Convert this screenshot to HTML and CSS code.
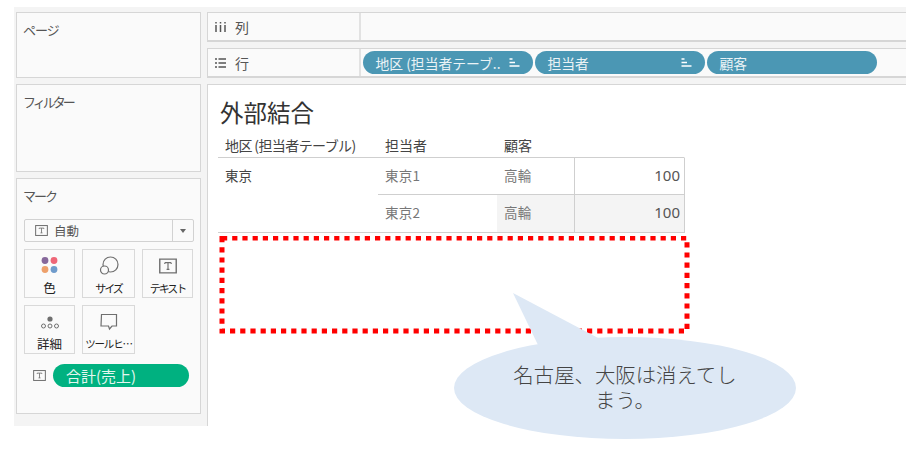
FILE: index.html
```html
<!DOCTYPE html>
<html lang="ja">
<head>
<meta charset="utf-8">
<title>外部結合</title>
<link rel="stylesheet" href="styles.css">
</head>
<body>
<svg class="defs" width="0" height="0" aria-hidden="true">
  <symbol id="t-box" viewBox="0 0 14 12">
    <rect x="0.6" y="0.6" width="12.8" height="10.8" fill="none" stroke="#6f6f6f" stroke-width="1.1"/>
    <path d="M4.5 3.4h5M7 3.4v5.2M5.9 8.6h2.2M4.5 3.4v1M9.5 3.4v1" fill="none" stroke="#6f6f6f" stroke-width="0.9"/>
  </symbol>
  <symbol id="sort" viewBox="0 0 11 9">
    <path d="M0.5 1h3M0.5 4.5h5.5M0.5 8h10" fill="none" stroke="#fff" stroke-width="1.4"/>
  </symbol>
</svg>
<div class="app">
  <aside class="side">
    <section class="pane pane-pages"><h2 class="pane-title">ページ</h2></section>
    <section class="pane pane-filter"><h2 class="pane-title title-filter">フィルター</h2></section>
    <section class="pane pane-marks">
      <h2 class="pane-title title-marks">マーク</h2>
      <div class="select">
        <svg class="t-icon"><use href="#t-box"/></svg>
        <span class="select-label">自動</span>
        <span class="select-arrow"><i class="caret"></i></span>
      </div>
      <div class="cards">
        <div class="card card-a">
          <svg class="card-icon" width="20" height="20" viewBox="0 0 20 20">
            <circle cx="5" cy="4.5" r="3.4" fill="#86689b"/><circle cx="14" cy="4.5" r="3.4" fill="#ee6677"/>
            <circle cx="5" cy="13.5" r="3.4" fill="#eda06b"/><circle cx="14" cy="13.5" r="3.4" fill="#6f9bcb"/>
          </svg>
          <span class="card-label">色</span>
        </div>
        <div class="card card-b">
          <svg class="card-icon" width="20" height="20" viewBox="0 0 20 20">
            <circle cx="11.5" cy="8.5" r="7.5" fill="none" stroke="#6f6f6f" stroke-width="1.2"/>
            <circle cx="5.5" cy="14" r="4" fill="#fafafa" stroke="#6f6f6f" stroke-width="1.2"/>
          </svg>
          <span class="card-label card-label-kana">サイズ</span>
        </div>
        <div class="card card-c">
          <svg class="card-icon" width="18" height="16" viewBox="0 0 14 12"><use href="#t-box"/></svg>
          <span class="card-label card-label-kana">テキスト</span>
        </div>
        <div class="card card-a">
          <svg class="card-icon" width="20" height="20" viewBox="0 0 20 20">
            <circle cx="10" cy="7" r="2.6" fill="#6f6f6f"/>
            <circle cx="3.5" cy="14" r="2" fill="none" stroke="#6f6f6f"/><circle cx="10" cy="14" r="2" fill="none" stroke="#6f6f6f"/><circle cx="16.5" cy="14" r="2" fill="none" stroke="#6f6f6f"/>
          </svg>
          <span class="card-label">詳細</span>
        </div>
        <div class="card card-b">
          <svg class="card-icon" width="20" height="20" viewBox="0 0 20 20">
            <path d="M2.5 2.5h15v11.5h-4.5l-2.5 3-1-3h-7.5z" fill="none" stroke="#6f6f6f" stroke-width="1.2"/>
          </svg>
          <span class="card-label card-label-tight">ツールヒ…</span>
        </div>
      </div>
      <div class="mark-row">
        <svg class="t-icon"><use href="#t-box"/></svg>
        <span class="mark-pill">合計(売上)</span>
      </div>
    </section>
  </aside>
  <main class="main">
    <div class="shelf">
      <div class="shelf-label">
        <svg class="shelf-icon" width="11" height="10" viewBox="0 0 11 10"><path d="M1 3v7M5.5 3v7M10 3v7M1 0v1.4M5.5 0v1.4M10 0v1.4" fill="none" stroke="#555" stroke-width="1.5"/></svg>
        <span>列</span>
      </div>
      <div class="shelf-body"></div>
    </div>
    <div class="shelf">
      <div class="shelf-label">
        <svg class="shelf-icon" width="11" height="10" viewBox="0 0 11 10"><path d="M0 1h2M0 5h2M0 9h2M3.5 1h7.5M3.5 5h7.5M3.5 9h7.5" fill="none" stroke="#555" stroke-width="1.5"/></svg>
        <span>行</span>
      </div>
      <div class="shelf-body">
        <div class="pill"><span>地区 (担当者テーブ..</span><svg class="sort" width="11" height="9"><use href="#sort"/></svg></div>
        <div class="pill"><span>担当者</span><svg class="sort" width="11" height="9"><use href="#sort"/></svg></div>
        <div class="pill"><span>顧客</span></div>
      </div>
    </div>
    <div class="view">
      <h1 class="view-title">外部結合</h1>
      <div class="crosstab">
        <div class="cell head first">地区 (担当者テーブル)</div>
        <div class="cell head">担当者</div>
        <div class="cell head">顧客</div>
        <div class="cell head plain"></div>
        <div class="cell region">東京</div>
        <div class="cell dim rule">東京1</div>
        <div class="cell dim rule">高輪</div>
        <div class="cell num rule">100</div>
        <div class="cell dim last">東京2</div>
        <div class="cell dim last shade">高輪</div>
        <div class="cell num last shade">100</div>
      </div>
    </div>
  </main>
</div>
<svg class="overlay-box" width="476" height="100" viewBox="0 0 476 100" aria-hidden="true">
  <rect x="4" y="2" width="465" height="93" fill="none" stroke="#ff0000" stroke-width="5" stroke-dasharray="5.2 5"/>
</svg>
<div class="callout">
  <svg class="callout-shape" width="350" height="150" viewBox="0 0 350 150" aria-hidden="true">
    <ellipse cx="171" cy="97" rx="171" ry="51" fill="#dde8f5"/>
    <path d="M59 2L84 54L146 48z" fill="#dde8f5"/>
  </svg>
  <p class="callout-text">名古屋、大阪は消えてしまう。</p>
</div>
</body>
</html>
```

FILE: styles.css
```css
* { box-sizing: border-box; }
html, body { margin: 0; padding: 0; }
body {
  width: 918px;
  height: 475px;
  background: #fff;
  position: relative;
  overflow: hidden;
  font-family: "Noto Sans CJK JP", "Noto Sans", sans-serif;
  color: #444;
}
.defs { position: absolute; }
.app {
  margin: 7px 0 0 14px;
  width: 892px;
  height: 419px;
  padding: 5px 0 0 2px;
  background: #f4f4f4;
  display: flex;
  gap: 6px;
}
.side {
  width: 185px;
  flex: none;
  display: flex;
  flex-direction: column;
  gap: 6px;
}
.pane {
  background: #fafafa;
  border: 1px solid #d6d6d6;
  padding: 8px 6px;
}
.pane-pages { height: 66px; }
.pane-filter { height: 88px; }
.pane-marks { height: 236px; padding-top: 8px; }
.pane-title {
  margin: 0;
  font-size: 13px;
  font-weight: 400;
  line-height: 18px;
  letter-spacing: -1px;
  color: #555;
}
.title-filter { letter-spacing: -3px; }
.title-marks { letter-spacing: -2px; }
.select {
  margin: 14px 1px 0;
  width: 170px;
  height: 23px;
  border: 1px solid #d2d2d2;
  border-radius: 2px;
  display: flex;
  align-items: center;
  padding-left: 10px;
}
.t-icon { width: 13px; height: 11px; flex: none; }
.select-label {
  font-size: 12.5px;
  margin-left: 6px;
  flex: 1;
  color: #555;
}
.select-arrow {
  width: 21px;
  height: 100%;
  border-left: 1px solid #d2d2d2;
  display: flex;
  align-items: center;
  justify-content: center;
}
.caret {
  width: 0;
  height: 0;
  border: 3px solid transparent;
  border-top: 4px solid #666;
  border-bottom: 0;
}
.cards {
  margin: 7px 0 0 1px;
  display: grid;
  grid-template-columns: 51px 53px 51px;
  grid-auto-rows: 49px;
  column-gap: 7px;
  row-gap: 7px;
}
.card {
  border: 1px solid #d9d9d9;
  display: flex;
  flex-direction: column;
  align-items: center;
  padding-top: 6px;
}
.card-icon { display: block; height: 20px; flex: none; }
.card-label {
  margin-top: 4px;
  font-size: 12.5px;
  line-height: 16px;
  color: #222;
  white-space: nowrap;
}
.card-label-kana { font-size: 11px; letter-spacing: -2px; }
.card-label-tight { font-size: 10.5px; letter-spacing: -1.2px; }
.mark-row {
  margin: 10px 0 0 10px;
  display: flex;
  align-items: center;
  gap: 7px;
}
.mark-pill {
  width: 136px;
  height: 23px;
  border-radius: 12px;
  background: #00b180;
  color: #e4f6ef;
  font-size: 15px;
  line-height: 23px;
  padding-left: 13px;
}
.main {
  flex: 1;
  min-width: 0;
  display: flex;
  flex-direction: column;
  gap: 6px;
}
.shelf {
  height: 30px;
  flex: none;
  display: flex;
  background: #fafafa;
  border: solid #d6d6d6;
  border-width: 1px 0 2px 1px;
}
.shelf-label {
  width: 153px;
  flex: none;
  border-right: 2px solid #e2e2e2;
  display: flex;
  align-items: center;
  padding-left: 7px;
  font-size: 14px;
  color: #555;
  gap: 9px;
}
.shelf-body {
  flex: 1;
  display: flex;
  align-items: center;
  gap: 1.5px;
  padding-left: 1.5px;
}
.pill {
  width: 170.5px;
  height: 23px;
  border-radius: 12px;
  background: #4b97b4;
  color: #eaf3f6;
  font-size: 13.8px;
  display: flex;
  align-items: center;
  justify-content: space-between;
  padding: 0 13px;
  white-space: nowrap;
}
.sort { flex: none; }
.view {
  flex: 1;
  background: #fff;
  border: solid #d6d6d6;
  border-width: 1px 0 0 1px;
  padding: 10px 0 0 10px;
}
.view-title {
  margin: 0 0 0 2px;
  font-size: 23.5px;
  font-weight: 400;
  line-height: 34px;
  color: #333;
}
.crosstab {
  margin-top: 6px;
  width: 467px;
  display: grid;
  grid-template-columns: 160px 119px 77px 111px;
  grid-template-rows: 23px 37px 38px;
  font-size: 13.5px;
}
.cell {
  padding: 0 7px 2px;
  display: flex;
  align-items: center;
  white-space: nowrap;
}
.head {
  border-bottom: 1px solid #cfcfcf;
  color: #444;
  font-size: 14px;
}
.first { letter-spacing: -0.6px; }
.plain { border-right: 1px solid transparent; }
.region {
  grid-row: span 2;
  border-bottom: 1px solid #cfcfcf;
  align-items: flex-start;
  padding-top: 7px;
  color: #444;
}
.dim { color: #777; letter-spacing: 0.3px; }
.rule { border-bottom: 1px solid #cfcfcf; }
.last { border-bottom: 1px solid #cfcfcf; padding-bottom: 3px; }
.num {
  justify-content: flex-end;
  color: #555;
  padding-right: 4px;
  font-family: "Noto Sans", sans-serif;
  font-size: 15px;
  border-left: 1px solid #cfcfcf;
  border-right: 1px solid #cfcfcf;
}
.shade { background: #f4f4f4; }
.overlay-box {
  position: absolute;
  left: 218px;
  top: 236px;
}
.callout {
  position: absolute;
  left: 454px;
  top: 291px;
  width: 342px;
  height: 150px;
}
.callout-shape { position: absolute; left: 0; top: 0; }
.callout-text {
  position: absolute;
  left: 55px;
  top: 71px;
  width: 232px;
  margin: 0;
  text-align: center;
  font-size: 20.4px;
  font-weight: 300;
  line-height: 25px;
  color: #444;
}
```
